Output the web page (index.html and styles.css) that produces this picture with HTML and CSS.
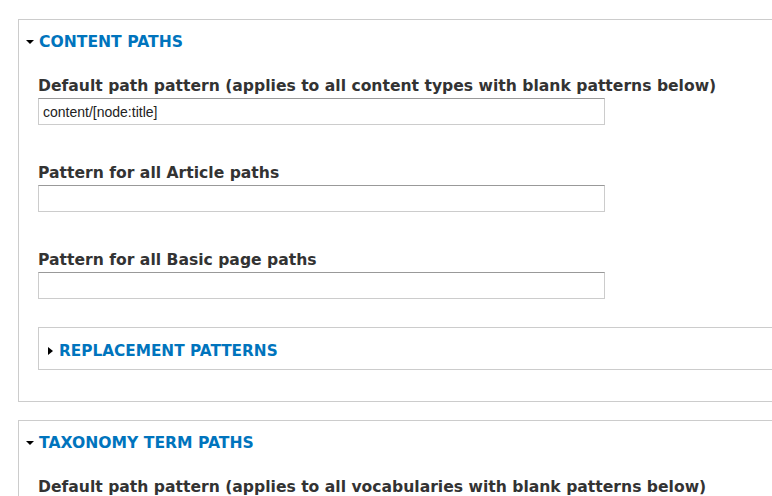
FILE: index.html
```html
<!DOCTYPE html>
<html lang="en">
<head>
    <meta charset="UTF-8">
    <meta name="viewport" content="width=device-width, initial-scale=1.0">
    <title>URL alias patterns</title>

    <link rel="stylesheet" href="styles.css">
</head>
<body>
    <main class="page">
        <section class="fieldset">
            <div class="summary"><span class="arrow open"></span>Content paths</div>
            <div class="fieldset-body">
                <div class="form-item">
                    <label for="node-default">Default path pattern (applies to all content types with blank patterns below)</label>
                    <input type="text" id="node-default" value="content/[node:title]">
                </div>
                <div class="form-item">
                    <label for="node-article">Pattern for all Article paths</label>
                    <input type="text" id="node-article">
                </div>
                <div class="form-item">
                    <label for="node-page">Pattern for all Basic page paths</label>
                    <input type="text" id="node-page">
                </div>
                <section class="fieldset inner">
                    <div class="summary"><span class="arrow closed"></span>Replacement patterns</div>
                </section>
            </div>
        </section>

        <section class="fieldset">
            <div class="summary"><span class="arrow open"></span>Taxonomy term paths</div>
            <div class="fieldset-body">
                <div class="form-item">
                    <label for="term-default">Default path pattern (applies to all vocabularies with blank patterns below)</label>
                    <input type="text" id="term-default">
                </div>
            </div>
        </section>
    </main>
</body>
</html>
```

FILE: styles.css
```css
* {
    box-sizing: border-box;
}

body {
    margin: 0;
    background: #fff;
    overflow: hidden;
    font-family: "DejaVu Sans", Verdana, sans-serif;
    color: #333;
}

.page {
    width: 1000px;
    height: 496px;
    overflow: hidden;
    padding: 19px 0 0 18px;
}

.fieldset {
    border: 1px solid #ccc;
    margin-bottom: 18px;
}

.summary {
    display: flex;
    align-items: center;
    gap: 5px;
    padding: 12px 0 1px 7px;
    height: 33px;
    font-size: 15.6px;
    line-height: 20px;
    font-weight: bold;
    text-transform: uppercase;
    color: #0074bd;
}

.arrow {
    width: 0;
    height: 0;
}

.arrow.open {
    border-left: 4px solid transparent;
    border-right: 4px solid transparent;
    border-top: 4px solid #000;
}

.arrow.closed {
    border-top: 4px solid transparent;
    border-bottom: 4px solid transparent;
    border-left: 5px solid #000;
}

.fieldset-body {
    padding: 24px 19px 31px;
}

.form-item {
    display: flex;
    flex-direction: column;
    gap: 3px;
    margin-bottom: 39px;
}

.form-item label {
    font-size: 15.6px;
    line-height: 18px;
    font-weight: bold;
    white-space: nowrap;
}

.form-item input {
    width: 567px;
    height: 27px;
    border: 1px solid #ccc;
    border-top-color: #999;
    padding: 0 4px;
    font-family: "Liberation Sans", Arial, sans-serif;
    font-size: 14px;
    color: #222;
}

.fieldset.inner {
    margin: -11px 0 0;
    height: 43px;
}

.fieldset.inner .summary {
    padding: 12px 0 0 9px;
    gap: 6px;
    font-size: 15.3px;
}
```
